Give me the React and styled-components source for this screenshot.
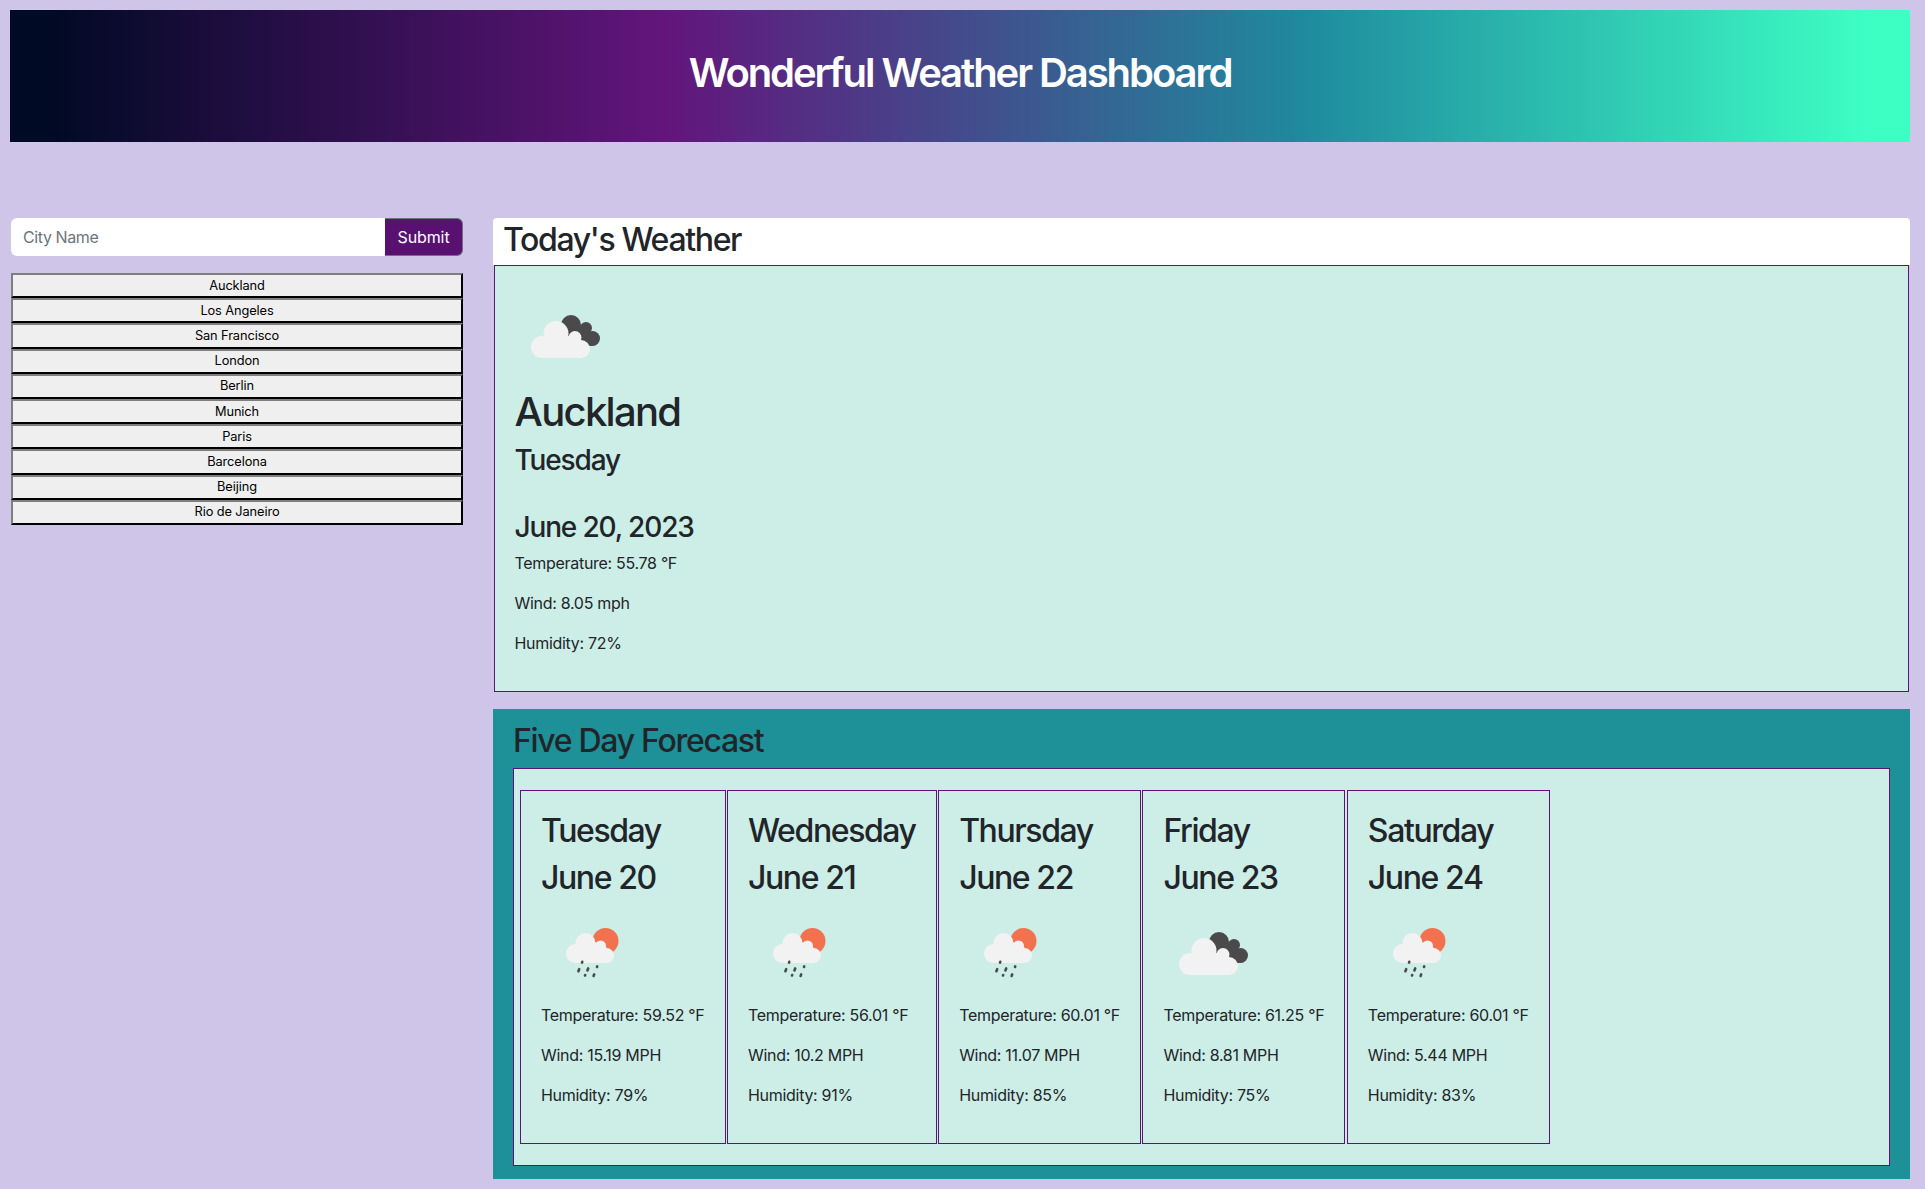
import React from "react";
import styled, { createGlobalStyle } from "styled-components";

const GlobalStyle = createGlobalStyle`
  * {
    box-sizing: border-box;
  }

  body {
    margin: 0;
    background: #cfc5e8;
    color: #212529;
    font-family: Inter, "Liberation Sans", sans-serif;
    font-size: 16px;
    line-height: 1.5;
  }
`;

const Page = styled.div`
  width: 1910px;
  min-height: 1189px;
  padding: 10px 0 0 10px;
`;

const Banner = styled.header`
  height: 132px;
  padding-top: 39px;
  text-align: center;
  background: linear-gradient(90deg, #000a24 2%, #63157c 34.5%, #1f8a9e 68%, #3dffc4 98%);
`;

const Title = styled.h1`
  margin: 0;
  color: #fff;
  font-size: 40px;
  font-weight: 600;
  line-height: 1.2;
  letter-spacing: -2.07px;
`;

const Columns = styled.div`
  display: flex;
  gap: 30px;
  margin-top: 76px;
`;

const Sidebar = styled.aside`
  flex: none;
  width: 452px;
  margin-left: 1px;
`;

const SearchForm = styled.form`
  display: flex;
  height: 38px;
  margin-bottom: 17px;
`;

const CityInput = styled.input`
  flex: 1;
  min-width: 0;
  padding: 0 12px;
  border: 0;
  border-radius: 6px 0 0 6px;
  background: #fff;
  font: inherit;
  letter-spacing: -0.4px;

  &::placeholder {
    color: #6c757d;
  }
`;

const SubmitButton = styled.button`
  width: 78px;
  border: 1px solid #6c757d;
  border-width: 1px 1px 1px 0;
  border-radius: 0 6px 6px 0;
  background: #581170;
  color: #fff;
  font: inherit;
  letter-spacing: -0.1px;
`;

const CityList = styled.div`
  display: flex;
  flex-direction: column;
`;

const CityButton = styled.button`
  height: 25.2px;
  padding: 1px 0 0;
  border: 2px outset #2a2a2a;
  background: #efefef;
  color: #000;
  font-family: inherit;
  font-size: 12.8px;
  line-height: 1;
  letter-spacing: -0.1px;
`;

const Main = styled.main`
  flex: 1;
  min-width: 0;
`;

const TodayHeading = styled.h2`
  height: 47px;
  margin: 0;
  padding: 3px 10px 0;
  border-radius: 4px 4px 0 0;
  background: #fff;
  font-size: 32px;
  font-weight: 500;
  line-height: 1.2;
  letter-spacing: -1.35px;
`;

const TodayPanel = styled.section`
  height: 427px;
  margin: 0 1.5px 17px 0.5px;
  padding: 20px;
  border: 1px solid #5a1478;
  background: #cdede7;
`;

const WeatherIcon = styled.svg`
  display: block;
  width: 100px;
  height: 100px;
`;

const CityName = styled.h1`
  margin: 2px 0 8px;
  font-size: 40px;
  font-weight: 500;
  line-height: 1.2;
  letter-spacing: -1.7px;
`;

const DayName = styled.h3`
  margin: 0 0 8px;
  font-size: 28px;
  font-weight: 500;
  line-height: 1.2;
  letter-spacing: -1.15px;
`;

const FullDate = styled(DayName)`
  margin: 33px 0 7px;
`;

const Stat = styled.p`
  margin: 0 0 16px;
  letter-spacing: -0.3px;
`;

const ForecastPanel = styled.section`
  padding: 13px 20px 13px;
  background: #1e9198;
`;

const ForecastHeading = styled.h2`
  margin: 0 0 8px;
  font-size: 32px;
  font-weight: 500;
  line-height: 1.2;
  letter-spacing: -1.3px;
`;

const ForecastBox = styled.div`
  display: flex;
  gap: 1.5px;
  padding: 21px 6px;
  border: 1px solid #5a1478;
  background: #cdede7;
`;

const DayCard = styled.article`
  flex: none;
  padding: 21px 20px 20px;
  border: 1px solid #5a1478;

  ${WeatherIcon} {
    margin-top: -2px;
  }
`;

const CardHeading = styled.h2`
  margin: 0 0 8px;
  font-size: 32px;
  font-weight: 500;
  line-height: 1.2;
  letter-spacing: -1.4px;
  white-space: nowrap;
`;

const CardStat = styled(Stat)`
  white-space: nowrap;
`;

const CloudsIcon = () => (
  <WeatherIcon viewBox="0 0 100 100">
    <g fill="#4a4a4a">
      <circle cx="56" cy="39" r="10" />
      <circle cx="71" cy="42" r="6" />
      <circle cx="77.5" cy="52.5" r="7.5" />
      <path d="M50 45 L70 38 L78 60 L60 60 Z" />
    </g>
    <g fill="#f2f2f2">
      <circle cx="27" cy="61" r="11" />
      <circle cx="41" cy="47.5" r="12.5" />
      <circle cx="60" cy="51.5" r="6.5" />
      <circle cx="66" cy="63" r="9" />
      <path d="M27 56 L38 50 L62 50 L66 54 L66 72 L27 72 Z" />
    </g>
  </WeatherIcon>
);

const RainIcon = () => (
  <WeatherIcon viewBox="0 0 100 100">
    <circle cx="64.5" cy="38" r="13" fill="#f27250" />
    <g fill="#f2f2f2">
      <circle cx="34.5" cy="50.5" r="9.5" />
      <circle cx="44.5" cy="40" r="10" />
      <circle cx="59.5" cy="43" r="5.5" />
      <circle cx="65.5" cy="52.5" r="7.5" />
      <path d="M34 41 L44 36 L62 42 L66 45 L66 60 L34 60 Z" />
    </g>
    <g stroke="#4a4a4a" strokeWidth="2.6" strokeLinecap="round">
      <path d="M41.3 58.8 L41 59.6" />
      <path d="M38.2 66.2 L37.4 68.2" />
      <path d="M47.2 65.4 L46.4 67.4" />
      <path d="M56.2 63.4 L56 64" />
      <path d="M44.2 72 L44 72.5" />
      <path d="M53.2 71.4 L52.6 73" />
    </g>
  </WeatherIcon>
);

const cities = [
  "Auckland",
  "Los Angeles",
  "San Francisco",
  "London",
  "Berlin",
  "Munich",
  "Paris",
  "Barcelona",
  "Beijing",
  "Rio de Janeiro",
];

const forecast = [
  { day: "Tuesday", date: "June 20", icon: "rain", temp: "59.52", wind: "15.19", humidity: 79 },
  { day: "Wednesday", date: "June 21", icon: "rain", temp: "56.01", wind: "10.2", humidity: 91 },
  { day: "Thursday", date: "June 22", icon: "rain", temp: "60.01", wind: "11.07", humidity: 85 },
  { day: "Friday", date: "June 23", icon: "clouds", temp: "61.25", wind: "8.81", humidity: 75 },
  { day: "Saturday", date: "June 24", icon: "rain", temp: "60.01", wind: "5.44", humidity: 83 },
];

export default function App() {
  return (
    <Page>
      <GlobalStyle />
      <Banner>
        <Title>Wonderful Weather Dashboard</Title>
      </Banner>
      <Columns>
        <Sidebar>
          <SearchForm onSubmit={(e) => e.preventDefault()}>
            <CityInput placeholder="City Name" />
            <SubmitButton>Submit</SubmitButton>
          </SearchForm>
          <CityList>
            {cities.map((city) => (
              <CityButton key={city}>{city}</CityButton>
            ))}
          </CityList>
        </Sidebar>
        <Main>
          <TodayHeading>Today's Weather</TodayHeading>
          <TodayPanel>
            <CloudsIcon />
            <CityName>Auckland</CityName>
            <DayName>Tuesday</DayName>
            <FullDate>June 20, 2023</FullDate>
            <Stat>Temperature: 55.78 °F</Stat>
            <Stat>Wind: 8.05 mph</Stat>
            <Stat>Humidity: 72%</Stat>
          </TodayPanel>
          <ForecastPanel>
            <ForecastHeading>Five Day Forecast</ForecastHeading>
            <ForecastBox>
              {forecast.map((f) => (
                <DayCard key={f.day}>
                  <CardHeading>{f.day}</CardHeading>
                  <CardHeading>{f.date}</CardHeading>
                  {f.icon === "rain" ? <RainIcon /> : <CloudsIcon />}
                  <CardStat>Temperature: {f.temp} °F</CardStat>
                  <CardStat>Wind: {f.wind} MPH</CardStat>
                  <CardStat>Humidity: {f.humidity}%</CardStat>
                </DayCard>
              ))}
            </ForecastBox>
          </ForecastPanel>
        </Main>
      </Columns>
    </Page>
  );
}
